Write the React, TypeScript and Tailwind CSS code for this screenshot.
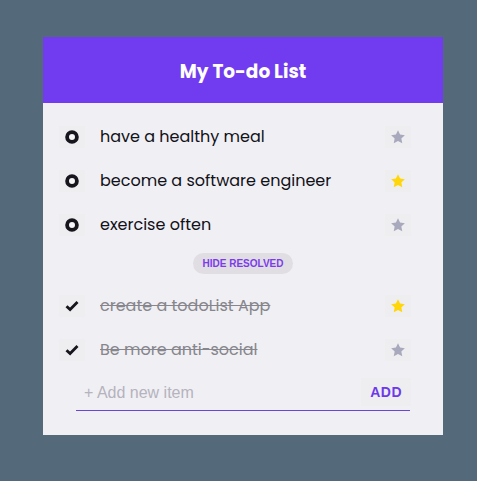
import React from 'react';

type Todo = { text: string; starred: boolean; done: boolean };

const todos: Todo[] = [
  { text: 'have a healthy meal', starred: false, done: false },
  { text: 'become a software engineer', starred: true, done: false },
  { text: 'exercise often', starred: false, done: false },
  { text: 'create a todoList App', starred: true, done: true },
  { text: 'Be more anti-social', starred: false, done: true },
];

const Star = ({ on }: { on: boolean }) => (
  <svg width="16" height="16" viewBox="0 0 24 24" className={on ? 'fill-[#ffd60a]' : 'fill-[#a9a9bd]'}>
    <path d="M12 1.8l3.1 6.6 7.2.9-5.3 5 1.4 7.1L12 17.9l-6.4 3.5 1.4-7.1-5.3-5 7.2-.9z" />
  </svg>
);

const Ring = () => (
  <svg width="14" height="14" viewBox="0 0 14 14">
    <circle cx="7" cy="7" r="4.9" fill="#f6f6f8" stroke="#16161c" strokeWidth="3.8" />
  </svg>
);

const Check = () => (
  <svg width="14" height="12" viewBox="0 0 14 12">
    <path d="M1.5 6.2l3.6 3.4 7.4-7.6" fill="none" stroke="#16161c" strokeWidth="2.8" strokeLinejoin="miter" />
  </svg>
);

const Row = ({ todo }: { todo: Todo }) => (
  <li className="flex items-center h-[44px] pl-[16px] pr-[32px]">
    <button className="w-[26px] h-[22px] flex items-center justify-center bg-[#eeeef1]">
      {todo.done ? <Check /> : <Ring />}
    </button>
    <span
      className={`ml-[15px] flex-1 text-[16px] ${
        todo.done ? 'line-through text-[#86868c] decoration-[#86868c]' : 'text-[#111118]'
      }`}
    >
      {todo.text}
    </span>
    <button className="w-[26px] h-[22px] flex items-center justify-center bg-[#eeeef1]">
      <Star on={todo.starred} />
    </button>
  </li>
);

export default function App() {
  return (
    <div className="min-h-[481px] bg-[#546a7b] pt-[37px] pl-[43px] font-['Poppins','Inter',sans-serif]">
      <div className="w-[400px] bg-[#f0eff4] pb-[24px]">
        <div className="h-[66px] pt-[3px] bg-[#713bef] flex items-center justify-center">
          <h1 className="text-white text-[18.5px] font-bold">My To-do List</h1>
        </div>
        <ul className="pt-[12px]">
          {todos.filter(t => !t.done).map(t => (
            <Row key={t.text} todo={t} />
          ))}
        </ul>
        <div className="flex justify-center pt-[6px] pb-[5px]">
          <button className="h-[21px] px-[10px] rounded-full bg-[#e0dee3] text-[#7c3aed] text-[10px] font-bold font-['Liberation_Sans',sans-serif]">
            HIDE RESOLVED
          </button>
        </div>
        <ul className="pt-[5px]">
          {todos.filter(t => t.done).map(t => (
            <Row key={t.text} todo={t} />
          ))}
        </ul>
        <div className="mx-[33px] mt-[2px] flex items-center border-b border-[#6a45d8] h-[37px]">
          <input
            placeholder="+ Add new item"
            className="flex-1 bg-transparent px-[8px] pt-[1px] text-[16px] outline-none placeholder:text-[#b5b3bd] font-['Liberation_Sans',sans-serif]"
          />
          <button className="h-[28px] px-[9px] mr-[-1px] bg-[#eeeef1] text-[#6d3aeb] text-[14px] font-bold tracking-[0.5px] font-['Liberation_Sans',sans-serif]">
            ADD
          </button>
        </div>
      </div>
    </div>
  );
}
